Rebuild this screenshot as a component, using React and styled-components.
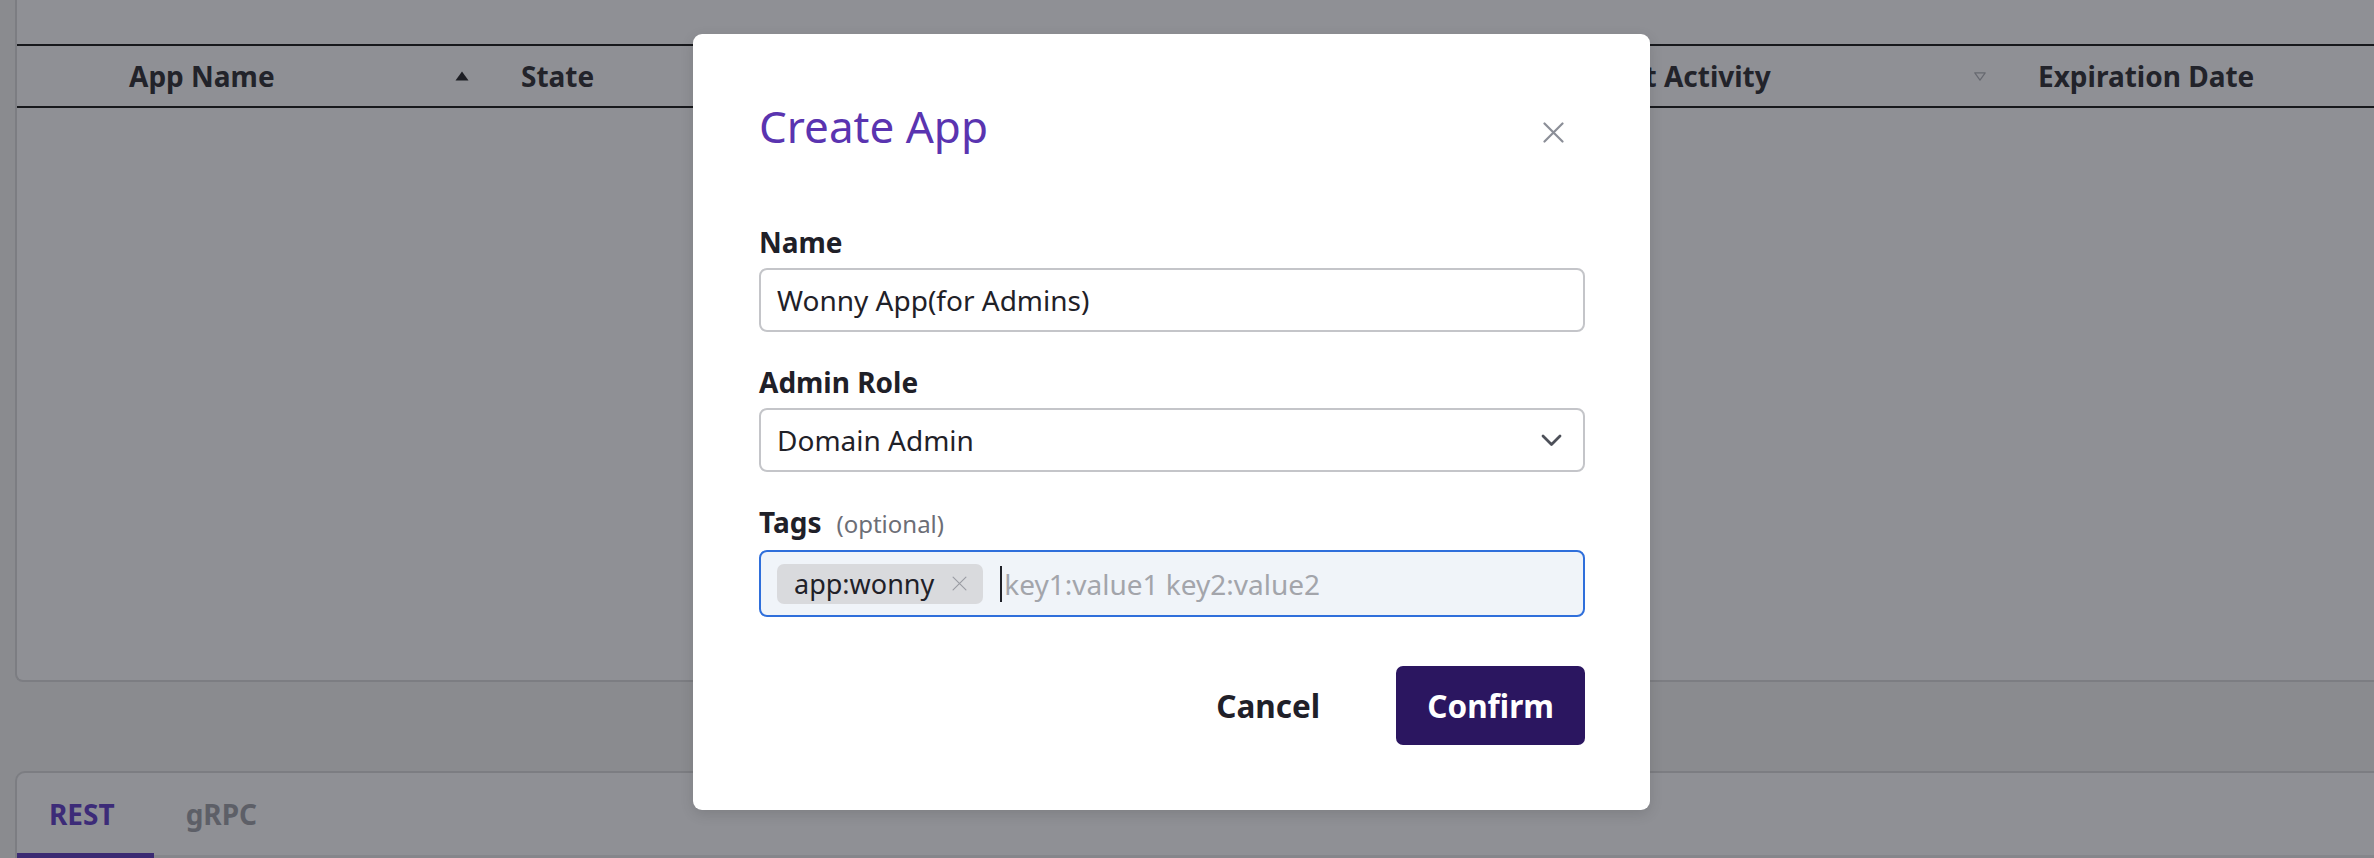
import React from "react";
import styled, { createGlobalStyle } from "styled-components";

const GlobalStyle = createGlobalStyle`
  html, body {
    margin: 0;
    padding: 0;
    background: #8a8b8f;
    font-family: "Noto Sans", "Open Sans", sans-serif;
  }
  * { box-sizing: border-box; }
`;

const columns = [
  { key: "check", label: "", width: 88 },
  { key: "name", label: "App Name", width: 392, sort: "asc" },
  { key: "state", label: "State", width: 500 },
  { key: "created", label: "Created", width: 577 },
  { key: "activity", label: "Last Activity", width: 440, sort: "none" },
  { key: "expire", label: "Expiration Date", width: 420 },
];

function SortAsc() {
  return (
    <svg width="14" height="10" viewBox="0 0 14 10">
      <polygon points="7,0.5 13.5,9.5 0.5,9.5" fill="#1d1e24" />
    </svg>
  );
}

function SortNone() {
  return (
    <svg width="12" height="9" viewBox="0 0 12 9">
      <polygon points="0.8,0.8 11.2,0.8 6,8.2" fill="none" stroke="#676970" strokeWidth="1.2" strokeLinejoin="round" />
    </svg>
  );
}

function CloseIcon({ size = 21, color = "#8b8e97", width = 2.2 }) {
  return (
    <svg width={size} height={size} viewBox="0 0 21 21">
      <path d="M1.5 1.5 L19.5 19.5 M19.5 1.5 L1.5 19.5" stroke={color} strokeWidth={width} strokeLinecap="round" />
    </svg>
  );
}

function Chevron() {
  return (
    <svg width="21" height="13" viewBox="0 0 21 13">
      <path d="M2 2 L10.5 10.5 L19 2" fill="none" stroke="#4d5059" strokeWidth="2.8" strokeLinecap="round" strokeLinejoin="round" />
    </svg>
  );
}

export default function App() {
  return (
    <Page>
      <GlobalStyle />
      <TableCard>
        <HeaderRow>
          {columns.map((c) => (
            <HeaderCell key={c.key} $width={c.width}>
              <span>{c.label}</span>
              {c.sort === "asc" && <SortAsc />}
              {c.sort === "none" && <SortNone />}
            </HeaderCell>
          ))}
        </HeaderRow>
      </TableCard>

      <TabCard>
        <TabList>
          <Tab $active>REST</Tab>
          <Tab>gRPC</Tab>
        </TabList>
      </TabCard>

      <Modal>
        <ModalHeader>
          <Title>Create App</Title>
          <CloseButton aria-label="close">
            <CloseIcon />
          </CloseButton>
        </ModalHeader>

        <Form>
          <Field>
            <Label>Name</Label>
            <TextInput value="Wonny App(for Admins)" readOnly />
          </Field>
          <Field>
            <Label>Admin Role</Label>
            <Select>
              <span>Domain Admin</span>
              <Chevron />
            </Select>
          </Field>
          <Field>
            <Label>
              Tags<Optional>(optional)</Optional>
            </Label>
            <TagBox>
              <Chip>
                <span>app:wonny</span>
                <CloseIcon size={15} color="#9a9ca3" width={1.6} />
              </Chip>
              <Caret />
              <Placeholder>key1:value1 key2:value2</Placeholder>
            </TagBox>
          </Field>
        </Form>

        <Footer>
          <CancelButton>Cancel</CancelButton>
          <ConfirmButton>Confirm</ConfirmButton>
        </Footer>
      </Modal>
    </Page>
  );
}

const Page = styled.div`
  position: relative;
  width: 100vw;
  height: 858px;
  overflow: hidden;
  background: #8a8b8f;
`;

const TableCard = styled.div`
  margin-left: 15px;
  width: 2500px;
  height: 682px;
  padding-top: 44px;
  background: #8f9095;
  border-left: 2px solid #7c7d82;
  border-bottom: 2px solid #7c7d82;
  border-bottom-left-radius: 8px;
`;

const HeaderRow = styled.div`
  display: flex;
  height: 64px;
  border-top: 2px solid #17181c;
  border-bottom: 2px solid #17181c;
`;

const HeaderCell = styled.div`
  flex: 0 0 ${(p) => p.$width}px;
  display: flex;
  align-items: center;
  justify-content: space-between;
  padding: 0 28px 0 24px;
  font-size: 28px;
  font-weight: 700;
  color: #22232a;
`;

const TabCard = styled.div`
  margin: 89px 0 0 15px;
  width: 2500px;
  height: 90px;
  background: #8f9095;
  border-left: 2px solid #7c7d82;
  border-top: 2px solid #7c7d82;
  border-top-left-radius: 10px;
`;

const TabList = styled.div`
  display: flex;
  border-bottom: 3px solid #85868b;
`;

const Tab = styled.div`
  padding: 20px 39px 18px 32px;
  font-size: 28px;
  line-height: 42px;
  font-weight: 700;
  color: ${(p) => (p.$active ? "#3c2b78" : "#5d5f67")};
  border-bottom: 5px solid ${(p) => (p.$active ? "#3b2a72" : "transparent")};
  margin-bottom: -3px;
`;

const Modal = styled.div`
  position: absolute;
  left: 693px;
  top: 34px;
  width: 957px;
  padding: 64px 65px 65px 66px;
  background: #ffffff;
  border-radius: 9px;
  box-shadow: 0 4px 14px rgba(0, 0, 0, 0.12);
`;

const ModalHeader = styled.div`
  display: flex;
  justify-content: space-between;
  align-items: flex-start;
`;

const Title = styled.h2`
  margin: 0;
  font-size: 44px;
  line-height: 57px;
  font-weight: 400;
  color: #5a34b0;
`;

const CloseButton = styled.button`
  width: 44px;
  height: 44px;
  margin: 12px 10px 0 0;
  padding: 0;
  border: none;
  background: none;
  display: flex;
  align-items: center;
  justify-content: center;
`;

const Form = styled.div`
  display: flex;
  flex-direction: column;
  gap: 29px;
  margin-top: 66px;
`;

const Field = styled.div`
  display: flex;
  flex-direction: column;
  gap: 5px;
`;

const Label = styled.label`
  display: flex;
  align-items: baseline;
  font-size: 28px;
  line-height: 42px;
  font-weight: 700;
  color: #1f2028;
`;

const Optional = styled.span`
  margin-left: 15px;
  font-size: 24px;
  font-weight: 400;
  color: #6c6e76;
`;

const TextInput = styled.input`
  height: 64px;
  padding: 0 16px;
  font-family: "Noto Sans", sans-serif;
  font-size: 28px;
  color: #1f2128;
  background: #fff;
  border: 2px solid #c4c5c9;
  border-radius: 8px;
  outline: none;
`;

const Select = styled.div`
  height: 64px;
  padding: 0 21px 0 16px;
  display: flex;
  align-items: center;
  justify-content: space-between;
  font-size: 28px;
  color: #1f2128;
  border: 2px solid #c4c5c9;
  border-radius: 8px;
`;

const TagBox = styled.div`
  height: 67px;
  padding: 0 16px;
  display: flex;
  align-items: center;
  background: #f0f4f9;
  border: 2px solid #2f6fdb;
  border-radius: 8px;
`;

const Chip = styled.div`
  height: 40px;
  display: flex;
  align-items: center;
  gap: 18px;
  padding: 0 16px 0 17px;
  background: #d9dadd;
  border-radius: 7px;
  font-size: 27px;
  color: #1f2128;
`;

const Caret = styled.span`
  width: 2px;
  height: 36px;
  margin-left: 17px;
  background: #1f2128;
`;

const Placeholder = styled.span`
  margin-left: 2px;
  font-size: 28px;
  color: #a3a5ab;
`;

const Footer = styled.div`
  display: flex;
  justify-content: flex-end;
  gap: 45px;
  margin-top: 49px;
`;

const ButtonBase = styled.button`
  height: 79px;
  padding: 0 31px;
  font-family: "Noto Sans", sans-serif;
  font-size: 31.5px;
  font-weight: 700;
  border: none;
  border-radius: 7px;
`;

const CancelButton = styled(ButtonBase)`
  background: transparent;
  color: #1f2029;
`;

const ConfirmButton = styled(ButtonBase)`
  background: #2b1660;
  color: #ffffff;
`;
